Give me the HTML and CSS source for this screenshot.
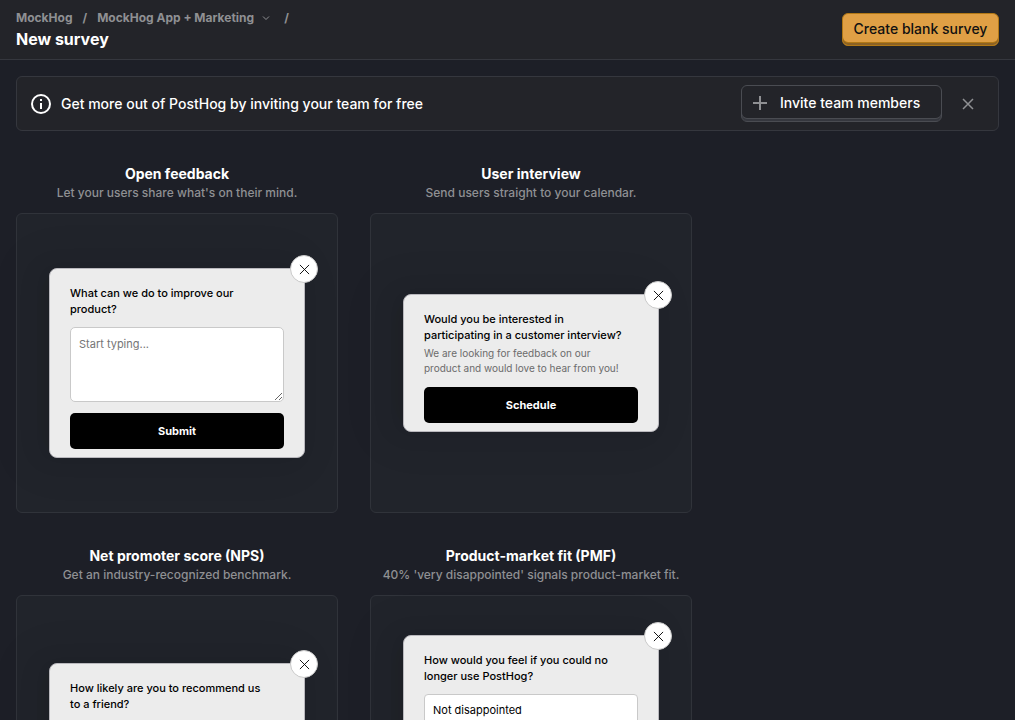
FILE: index.html
```html
<!DOCTYPE html>
<html lang="en">
<head>
<meta charset="utf-8">
<meta name="viewport" content="width=device-width, initial-scale=1">
<title>New survey</title>
<link rel="stylesheet" href="styles.css">
</head>
<body>
<svg class="sprite" aria-hidden="true">
  <symbol id="cross" viewBox="0 0 12 12"><path d="M1 1l10 10M11 1L1 11" fill="none" stroke="currentColor"/></symbol>
</svg>
<header class="topbar">
  <div class="heading">
    <nav class="breadcrumbs" aria-label="Breadcrumb">
      <a href="#">MockHog</a>
      <span>/</span>
      <button type="button" class="crumb-menu">MockHog App + Marketing
        <svg width="8" height="6" viewBox="0 0 8 6" aria-hidden="true"><path d="M1 1.5l3 3 3-3" fill="none" stroke="currentColor"/></svg>
      </button>
      <span>/</span>
    </nav>
    <h1>New survey</h1>
  </div>
  <button type="button" class="btn btn-primary">Create blank survey</button>
</header>
<main>
  <section class="banner">
    <svg class="info" width="20" height="20" viewBox="0 0 20 20" aria-hidden="true"><circle cx="10" cy="10" r="9" fill="none" stroke="#fff" stroke-width="2"/><path d="M9 5h2v2H9zM9 9h2v6H9z" fill="#fff"/></svg>
    <p>Get more out of PostHog by inviting your team for free</p>
    <button type="button" class="btn btn-secondary">
      <svg width="14" height="14" viewBox="0 0 14 14" aria-hidden="true"><path d="M7 0v14M0 7h14" fill="none" stroke="#8f9093" stroke-width="2"/></svg>
      Invite team members
    </button>
    <button type="button" class="dismiss" aria-label="Dismiss"><svg width="14" height="14" viewBox="0 0 14 14"><path d="M2 2l10 10M12 2L2 12" fill="none" stroke="currentColor" stroke-width="1.5"/></svg></button>
  </section>

  <div class="templates">
    <article class="template">
      <h2>Open feedback</h2>
      <p class="summary">Let your users share what's on their mind.</p>
      <div class="preview">
        <form class="survey">
          <button type="button" class="close" aria-label="Close"><svg width="11" height="11"><use href="#cross"/></svg></button>
          <label class="question" for="feedback">What can we do to improve our<br>product?</label>
          <textarea id="feedback" placeholder="Start typing..."></textarea>
          <button type="button" class="submit">Submit</button>
        </form>
      </div>
    </article>
    <article class="template">
      <h2>User interview</h2>
      <p class="summary">Send users straight to your calendar.</p>
      <div class="preview">
        <form class="survey">
          <button type="button" class="close" aria-label="Close"><svg width="11" height="11"><use href="#cross"/></svg></button>
          <p class="question">Would you be interested in<br>participating in a customer interview?</p>
          <p class="description">We are looking for feedback on our<br>product and would love to hear from you!</p>
          <button type="button" class="submit">Schedule</button>
        </form>
      </div>
    </article>
    <article class="template">
      <h2>Net promoter score (NPS)</h2>
      <p class="summary">Get an industry-recognized benchmark.</p>
      <div class="preview">
        <form class="survey">
          <button type="button" class="close" aria-label="Close"><svg width="11" height="11"><use href="#cross"/></svg></button>
          <p class="question">How likely are you to recommend us<br>to a friend?</p>
          <div class="ratings">
            <button type="button">0</button><button type="button">1</button><button type="button">2</button><button type="button">3</button><button type="button">4</button><button type="button">5</button><button type="button">6</button><button type="button">7</button><button type="button">8</button><button type="button">9</button><button type="button">10</button>
          </div>
          <div class="bounds"><span>Unlikely</span><span>Very likely</span></div>
          <button type="button" class="submit">Submit</button>
        </form>
      </div>
    </article>
    <article class="template">
      <h2>Product-market fit (PMF)</h2>
      <p class="summary">40% 'very disappointed' signals product-market fit.</p>
      <div class="preview">
        <form class="survey">
          <button type="button" class="close" aria-label="Close"><svg width="11" height="11"><use href="#cross"/></svg></button>
          <p class="question">How would you feel if you could no<br>longer use PostHog?</p>
          <div class="choices">
            <label><input type="radio" name="pmf">Not disappointed</label>
            <label><input type="radio" name="pmf">Somewhat disappointed</label>
            <label><input type="radio" name="pmf">Very disappointed</label>
          </div>
          <button type="button" class="submit">Submit</button>
        </form>
      </div>
    </article>
  </div>
</main>
</body>
</html>
```
FILE: styles.css
```css
* { box-sizing: border-box; }
html { background: #1d1f27; scrollbar-width: none; }
body { margin: 0; background: #1d1f27; color: #fff; font: 500 14px/20px Inter, "Liberation Sans", sans-serif; }
h1, h2, p { margin: 0; }
button { font: inherit; cursor: pointer; }
.sprite { display: none; }

.topbar { display: flex; align-items: center; justify-content: space-between; min-height: 60px; padding: 0 16px; background: #232429; border-bottom: 1px solid #35373e; }
.breadcrumbs { display: flex; align-items: center; gap: 10px; font-size: 12px; font-weight: 700; line-height: 18px; color: #8f9093; }
.breadcrumbs a { color: inherit; text-decoration: none; }
.crumb-menu { display: flex; align-items: center; gap: 8px; margin-right: 4px; padding: 0; border: 0; background: none; color: inherit; }
h1 { font-size: 16px; line-height: 24px; font-weight: 700; }

.btn { display: flex; align-items: center; border-radius: 6px; white-space: nowrap; }
.btn-primary { justify-content: center; min-width: 157px; height: 33px; padding: 0 8px 1px; border: 1px solid #b17816; background: #e0a045; color: #111; box-shadow: inset 0 -2px #8c6224, inset 0 -3px #b17816; }
.btn-secondary { gap: 13px; min-width: 201px; height: 37px; padding: 0 12px 2px 11px; border: 1px solid #4a4c52; background: #232429; color: #fff; box-shadow: inset 0 -2px #35373e, inset 0 -3px #4a4c52; }

main { padding: 16px; }
.banner { display: flex; align-items: center; min-height: 55px; padding: 0 23px 0 14px; border: 1px solid #35373e; border-radius: 6px; background: #232429; }
.banner p { flex: 1; padding-left: 10px; }
.dismiss { display: flex; margin-left: 19px; padding: 0; border: 0; background: none; color: #8f9093; }

.templates { display: grid; grid-template-columns: repeat(auto-fill, 322px); gap: 32px; padding-top: 32px; }
.template { text-align: center; }
h2 { font-size: 14px; line-height: 22px; font-weight: 700; }
.summary { padding-bottom: 12px; font-size: 12px; line-height: 16px; color: #8f9093; }
.preview { display: flex; align-items: center; justify-content: center; height: 300px; border: 1px solid #30333a; border-radius: 6px; background: #21242b; }

.survey { position: relative; width: 256px; padding: 16px 20px 8px; border: 1px solid #b9b8bd; border-radius: 8px; background: #ececec; color: #000; font-size: 11px; line-height: 16px; text-align: left; box-shadow: -6px 0 16px -8px rgba(0, 0, 0, .08), -9px 0 28px rgba(0, 0, 0, .05), -12px 0 48px 16px rgba(0, 0, 0, .03); }
.question { display: block; }
.close { position: absolute; top: -14px; right: -14px; display: flex; align-items: center; justify-content: center; width: 28px; height: 28px; padding: 0; border: 1px solid #c9c9c9; border-radius: 50%; background: #fff; color: #000; }
textarea { display: block; width: 100%; height: 75px; margin-top: 10px; padding: 8px; border: 1px solid #c9c9c9; border-radius: 5px; background: #fff; font: 400 11px/16px Inter, sans-serif; resize: both; }
textarea::placeholder { color: #757575; }
.description { padding-top: 3px; margin-bottom: 11px; font-size: 10px; font-weight: 400; line-height: 15px; color: #6b6b6b; }
.submit { display: block; width: 100%; height: 36px; margin-top: 11px; padding: 0; border: 0; border-radius: 5px; background: #000; color: #fff; font-weight: 700; text-align: center; }
.ratings { display: flex; height: 34px; margin-top: 10px; overflow: hidden; border: 1px solid #c9c9c9; border-radius: 5px; }
.ratings button { flex: 1; padding: 0; border: 0; background: #eee; color: #000; }
.bounds { display: flex; justify-content: space-between; font-size: 10px; line-height: 15px; }
.choices { display: grid; gap: 6px; margin-top: 10px; }
.choices label { display: flex; align-items: center; height: 31px; padding: 0 8px; border: 1px solid #c9c9c9; border-radius: 4px; background: #fff; font-weight: 400; }
.choices input { appearance: none; width: 0; height: 0; margin: 0; }
```
